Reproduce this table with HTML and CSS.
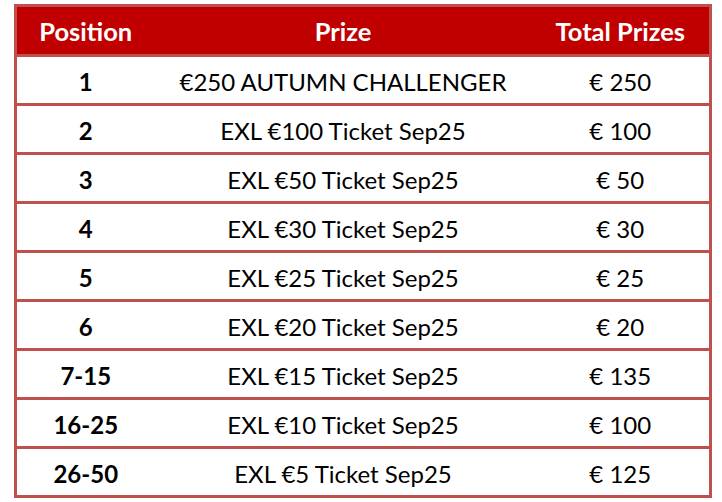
FILE: index.html
```html
<!DOCTYPE html>
<html>
<head>
<meta charset="utf-8">
<link rel="stylesheet" href="styles.css">
</head>
<body>
<table class="prizes">
  <colgroup>
    <col class="c-pos">
    <col class="c-prize">
    <col class="c-total">
  </colgroup>
  <thead>
    <tr><th>Position</th><th>Prize</th><th>Total Prizes</th></tr>
  </thead>
  <tbody>
    <tr><td class="pos">1</td><td>€250 AUTUMN CHALLENGER</td><td>€ 250</td></tr>
    <tr><td class="pos">2</td><td>EXL €100 Ticket Sep25</td><td>€ 100</td></tr>
    <tr><td class="pos">3</td><td>EXL €50 Ticket Sep25</td><td>€ 50</td></tr>
    <tr><td class="pos">4</td><td>EXL €30 Ticket Sep25</td><td>€ 30</td></tr>
    <tr><td class="pos">5</td><td>EXL €25 Ticket Sep25</td><td>€ 25</td></tr>
    <tr><td class="pos">6</td><td>EXL €20 Ticket Sep25</td><td>€ 20</td></tr>
    <tr><td class="pos">7-15</td><td>EXL €15 Ticket Sep25</td><td>€ 135</td></tr>
    <tr><td class="pos">16-25</td><td>EXL €10 Ticket Sep25</td><td>€ 100</td></tr>
    <tr><td class="pos">26-50</td><td>EXL €5 Ticket Sep25</td><td>€ 125</td></tr>
  </tbody>
</table>
</body>
</html>
```

FILE: styles.css
```css
html, body {
  margin: 0;
  padding: 0;
  background: #ffffff;
}
body {
  padding: 4px 0 0 14px;
  font-family: Lato, "Open Sans", sans-serif;
}
.prizes {
  border-collapse: collapse;
  table-layout: fixed;
  width: 695px;
  border: 3px solid #c0504d;
}
.c-pos { width: 139px; }
.c-prize { width: 377px; }
.c-total { width: 179px; }
.prizes th {
  background: #c00000;
  color: #ffffff;
  font-weight: 700;
  font-size: 25.5px;
  height: 50px;
  box-sizing: border-box;
  padding: 0;
  text-align: center;
  vertical-align: middle;
  border-bottom: 3px solid #c0504d;
}
.prizes td {
  height: 49px;
  padding: 3px 0 0 0;
  box-sizing: border-box;
  text-align: center;
  vertical-align: middle;
  font-size: 24px;
  color: #000000;
  border-top: 3px solid #c0504d;
}
.prizes td.pos {
  font-weight: 700;
}
```
